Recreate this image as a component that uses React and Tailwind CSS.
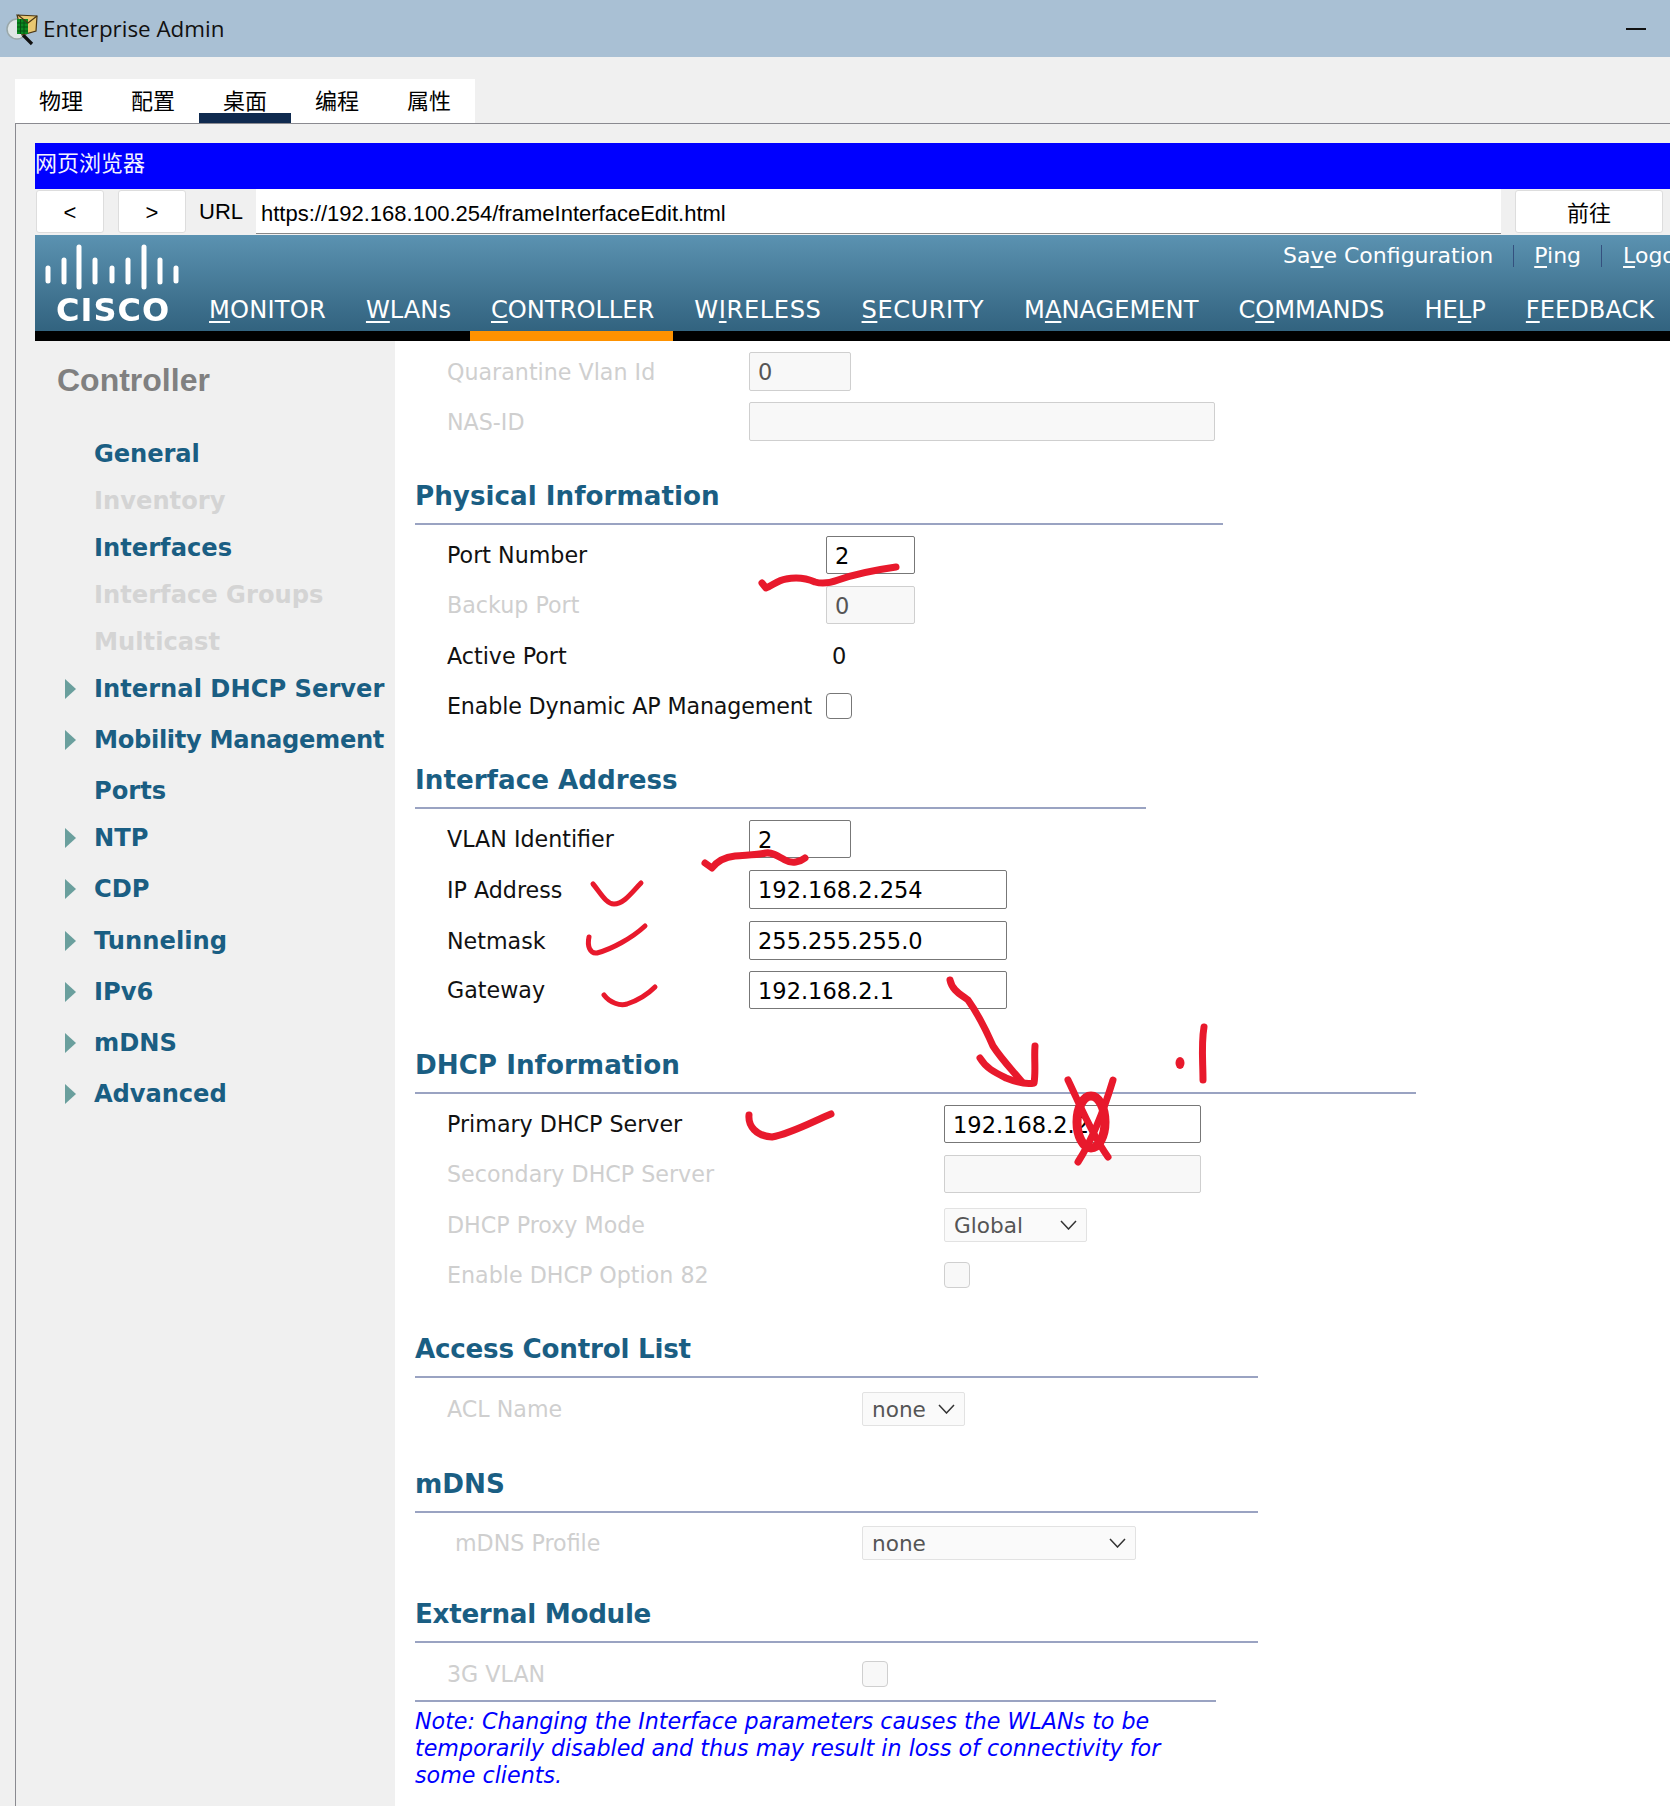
import React from "react";

const dv = "font-['DejaVu_Sans',sans-serif]";
const cjk = "font-['Noto_Sans_CJK_SC',sans-serif]";
const lib = "font-['Liberation_Sans',sans-serif]";

function Tab({ children, active }) {
  return (
    <div className="relative w-[92px] h-[44px] flex items-start justify-center pt-[5px]">
      <span className={`${cjk} text-[22px] leading-[30px] text-black`}>{children}</span>
      {active && <div className="absolute left-0 right-0 bottom-0 h-[10px] bg-[#0f2a4f]" />}
    </div>
  );
}

function Nav({ pre, u, post, cls = "" }) {
  return (
    <span className={`whitespace-nowrap ${cls}`}>
      {pre}
      <span className="underline underline-offset-[3px] decoration-[2px]">{u}</span>
      {post}
    </span>
  );
}

function Caret() {
  return (
    <svg width="13" height="22" viewBox="0 0 13 22" className="block blur-[0.5px]">
      <polygon points="1,1 12,11 1,21" fill="#6a9f9d" />
    </svg>
  );
}

const sideItems = [
  ["General", false, false, "mt-[34px]", "tracking-[-0.1px]"],
  ["Inventory", true, false, "mt-[7px]", ""],
  ["Interfaces", false, false, "mt-[7px]", ""],
  ["Interface Groups", true, false, "mt-[7px]", ""],
  ["Multicast", true, false, "mt-[7px]", ""],
  ["Internal DHCP Server", false, true, "mt-[7px]", ""],
  ["Mobility Management", false, true, "mt-[11px]", "tracking-[-0.35px]"],
  ["Ports", false, false, "mt-[11px]", ""],
  ["NTP", false, true, "mt-[7px]", ""],
  ["CDP", false, true, "mt-[11px]", ""],
  ["Tunneling", false, true, "mt-[12px]", ""],
  ["IPv6", false, true, "mt-[11px]", ""],
  ["mDNS", false, true, "mt-[11px]", ""],
  ["Advanced", false, true, "mt-[11px]", "tracking-[-0.1px]"],
];

function Heading({ children, width, mt, cls = "" }) {
  return (
    <div className={`${mt} ${width} h-[47px] ml-[20px] border-b-2 border-[#9aa3c2]`}>
      <div className={`${dv} font-bold text-[26.2px] leading-[36px] text-[#1a5e83] whitespace-nowrap ${cls}`}>{children}</div>
    </div>
  );
}

function Row({ label, labelW = "w-[302px]", disabled, mt, h = "h-[39px]", pl = "pl-[52px]", lc = "", children }) {
  return (
    <div className={`${mt} ${h} ${pl} flex items-center`}>
      <div className={`${labelW} shrink-0 pt-[2px] ${dv} text-[22.2px] whitespace-nowrap ${lc} ${disabled ? "text-[#cfcfcf]" : "text-[#111]"}`}>{label}</div>
      {children}
    </div>
  );
}

function Input({ value, w, disabled, h = "h-[39px]" }) {
  return (
    <div
      className={`${w} ${h} rounded-[2px] border flex items-center pl-[8px] pt-[3px] ${dv} text-[22.5px] ${
        disabled ? "bg-[#f8f8f8] border-[#cfcfcf] text-[#555]" : "bg-white border-[#777] text-black"
      }`}
    >
      {value}
    </div>
  );
}

function Select({ value, w }) {
  return (
    <div className={`${w} h-[34px] rounded-[2px] border border-[#e2e2e2] bg-[#fafafa] flex items-center justify-between pl-[9px] pr-[9px] ${dv} text-[21.6px] text-[#555]`}>
      <span className="pt-[2px]">{value}</span>
      <svg width="17" height="10" viewBox="0 0 17 10" fill="none" stroke="#333" strokeWidth="1.5">
        <path d="M1 1l7.5 8L16 1" />
      </svg>
    </div>
  );
}

function Check({ disabled }) {
  return (
    <div className={`w-[26px] h-[26px] rounded-[4px] border ${disabled ? "border-[#cfcfcf] bg-[#f8f8f8]" : "border-[#777] bg-white"}`} />
  );
}

function Ink() {
  const thick = [
    "M762 583 L766 588 C772 586 778 580 786 579 C796 577 806 578 815 582 C822 584 830 583 838 580 C855 574 875 570 896 567",
    "M705 863 L712 868 C718 860 726 857 735 856 C745 855 758 855 766 853 C772 852 778 856 785 860 C792 864 800 862 805 858",
    "M749 1115 C748 1126 756 1136 772 1137 C790 1134 812 1122 831 1114",
    "M950 980 C952 990 960 994 968 1000 C978 1014 986 1030 993 1046 C1002 1060 1014 1072 1022 1082",
    "M980 1058 C986 1068 994 1072 1006 1078 C1016 1082 1026 1085 1034 1083 C1036 1072 1034 1058 1035 1046",
    "M1204 1027 C1201 1044 1203 1062 1203 1080",
    "M1068 1080 C1080 1105 1092 1135 1108 1157",
    "M1113 1080 C1104 1110 1092 1140 1078 1162",
  ];
  const thin = [
    "M593 884 C600 892 606 904 614 904 C624 904 632 892 641 883",
    "M589 937 C587 946 590 954 597 953 C612 949 632 938 645 926",
    "M604 995 C610 1003 620 1006 627 1004 C636 1001 646 996 655 987",
  ];
  return (
    <svg className="absolute left-0 top-0 pointer-events-none" width="1670" height="1806" viewBox="0 0 1670 1806" fill="none">
      {thick.map((d, i) => (
        <path key={i} d={d} stroke="#e8192c" strokeWidth="7" strokeLinecap="round" strokeLinejoin="round" />
      ))}
      {thin.map((d, i) => (
        <path key={i} d={d} stroke="#e8192c" strokeWidth="5" strokeLinecap="round" strokeLinejoin="round" />
      ))}
      <ellipse cx="1091" cy="1122" rx="14" ry="26" stroke="#e8192c" strokeWidth="9" />
      <ellipse cx="1180" cy="1063" rx="4.5" ry="6" fill="#e8192c" />
    </svg>
  );
}

function CiscoBars() {
  const bars = [
    [48, 268, 281], [64, 260, 282], [79, 247, 287], [95, 260, 282], [112, 268, 281],
    [128, 260, 282], [144, 247, 287], [160, 260, 282], [176, 268, 281],
  ];
  return (
    <svg width="150" height="50" viewBox="35 240 150 50" className="block blur-[0.5px]">
      {bars.map(([x, a, b]) => (
        <line key={x} x1={x} x2={x} y1={a} y2={b} stroke="#fff" strokeWidth="5" strokeLinecap="round" />
      ))}
    </svg>
  );
}

export default function App() {
  return (
    <div className="relative w-[1670px] h-[1806px] overflow-hidden bg-[#f0f0f0]">
      {/* title bar */}
      <div className="h-[57px] bg-[#a9c0d4] flex items-center pl-[6px] pr-[24px]">
        <svg width="32" height="34" viewBox="0 0 32 34" className="shrink-0">
          <circle cx="11" cy="17" r="10" fill="#dfe6e6" stroke="#9aa8aa" strokeWidth="1.5" />
          <path d="M17 23l9 9" stroke="#111" strokeWidth="3.2" />
          <path d="M11 3l20 1-1 15-14 4z" fill="#e9c872" stroke="#4a3614" strokeWidth="1.2" />
          <rect x="11" y="7" width="11" height="15" fill="#0a8a20" />
          <path d="M11 11h11M11 15h11M11 19h11M14.5 7v15M18 7v15" stroke="#064d12" strokeWidth="0.9" />
          <path d="M12 3l10 8 9-7" fill="none" stroke="#4a3614" strokeWidth="1.2" />
        </svg>
        <span className="ml-[5px] pt-[1px] font-['Open_Sans',sans-serif] text-[22.4px] leading-[30px] text-[#111]">Enterprise Admin</span>
        <div className="ml-auto w-[20px] h-[2px] bg-[#111]" />
      </div>

      {/* tabs */}
      <div className="mt-[22px] ml-[15px] w-[460px] h-[44px] bg-white flex">
        <Tab>物理</Tab>
        <Tab>配置</Tab>
        <Tab active>桌面</Tab>
        <Tab>编程</Tab>
        <Tab>属性</Tab>
      </div>

      {/* panel */}
      <div className="ml-[15px] h-[1683px] border-l border-t border-[#8a8a90] pt-[19px] pl-[19px]">
        <div className={`h-[46px] bg-[#0000ff] flex items-center pb-[10px] ${cjk} text-[22px] text-[#f4f4ff]`}>网页浏览器</div>

        <div className={`h-[46px] flex ${lib}`}>
          <div className="w-[68px] h-[43px] ml-[1px] mt-[1px] pt-[1px] bg-white border border-[#ddd] rounded-[3px] flex items-center justify-center text-[22px] text-black">&lt;</div>
          <div className="w-[68px] h-[43px] ml-[14px] mt-[1px] pt-[1px] bg-white border border-[#ddd] rounded-[3px] flex items-center justify-center text-[22px] text-black">&gt;</div>
          <div className="w-[70px] pl-[13px] pt-[10px] text-[22px] leading-[26px] text-black">URL</div>
          <div className="w-[1245px] h-[45px] bg-white border-b border-[#888] pl-[5px] pt-[4px] flex items-center text-[22px] text-black whitespace-nowrap">
            https://192.168.100.254/frameInterfaceEdit.html
          </div>
          <div className={`w-[148px] h-[43px] ml-[14px] mt-[1px] bg-white border border-[#ddd] rounded-[3px] flex items-center justify-center ${cjk} text-[22px] text-black`}>前往</div>
        </div>

        {/* cisco header */}
        <div className="h-[96px] bg-gradient-to-b from-[#5b92b1] to-[#32637f] flex">
          <div className="w-[174px] shrink-0 pt-[5px]">
            <CiscoBars />
            <div className={`${dv} font-bold text-white text-[32px] leading-[32px] tracking-[1px] pl-[21px] mt-[4px] blur-[0.4px]`}>CISCO</div>
          </div>
          <div className="flex-1 flex flex-col min-w-0">
            <div className={`h-[41px] flex items-center pl-[1074px] ${dv} text-[22px] text-white whitespace-nowrap`}>
              <Nav pre="Sa" u="v" post="e Configuration" />
              <div className="w-[1px] h-[22px] bg-[#34507e] ml-[20px] mr-[20px] shrink-0" />
              <Nav u="P" post="ing" />
              <div className="w-[1px] h-[22px] bg-[#34507e] ml-[20px] mr-[21px] shrink-0" />
              <Nav u="L" post="ogout" />
            </div>
            <div className={`mt-[19px] flex gap-[40px] ${dv} text-[24.15px] leading-[30px] text-white`}>
              <Nav u="M" post="ONITOR" cls="tracking-[0.2px]" />
              <Nav u="W" post="LANs" />
              <Nav u="C" post="ONTROLLER" />
              <Nav pre="W" u="I" post="RELESS" cls="tracking-[0.6px]" />
              <Nav u="S" post="ECURITY" cls="tracking-[0.5px]" />
              <Nav pre="M" u="A" post="NAGEMENT" />
              <Nav pre="C" u="O" post="MMANDS" />
              <Nav pre="HE" u="L" post="P" />
              <Nav u="F" post="EEDBACK" />
            </div>
          </div>
        </div>

        {/* black bar */}
        <div className="h-[10px] bg-black flex">
          <div className="w-[435px] shrink-0" />
          <div className="w-[203px] bg-[#ff9200]" />
        </div>

        {/* body */}
        <div className="flex h-[1465px]">
          {/* sidebar */}
          <aside className="w-[360px] shrink-0">
            <div className={`mt-[19px] h-[40px] pl-[22px] flex items-center ${lib} font-bold text-[32px] text-[#808080]`}>Controller</div>
            {sideItems.map(([t, dis, arrow, mt, tr]) => (
              <div key={t} className={`${mt} h-[40px] flex items-center pl-[29px]`}>
                <div className="w-[30px] shrink-0">{arrow && <Caret />}</div>
                <span className={`${dv} font-bold text-[24.2px] whitespace-nowrap ${tr} ${dis ? "text-[#d4d4d4]" : "text-[#1a5e83]"}`}>{t}</span>
              </div>
            ))}
          </aside>

          {/* content */}
          <main className="flex-1 bg-white">
            <Row label="Quarantine Vlan Id" disabled mt="mt-[11px]"><Input value="0" w="w-[102px]" disabled /></Row>
            <Row label="NAS-ID" disabled mt="mt-[11px]"><Input value="" w="w-[466px]" disabled /></Row>

            <Heading width="w-[808px]" mt="mt-[37px]">Physical Information</Heading>
            <Row label="Port Number" labelW="w-[379px]" mt="mt-[11px]" h="h-[38px]"><Input value="2" w="w-[89px]" h="h-[38px]" /></Row>
            <Row label="Backup Port" labelW="w-[379px]" disabled mt="mt-[12px]" h="h-[38px]"><Input value="0" w="w-[89px]" h="h-[38px]" disabled /></Row>
            <Row label="Active Port" labelW="w-[385px]" mt="mt-[12px]"><span className={`${dv} text-[22.5px] text-[#111] pt-[2px]`}>0</span></Row>
            <Row label="Enable Dynamic AP Management" labelW="w-[379px]" lc="tracking-[-0.15px]" mt="mt-[11px]"><Check /></Row>

            <Heading width="w-[731px]" mt="mt-[37px]">Interface Address</Heading>
            <Row label="VLAN Identifier" mt="mt-[11px]" h="h-[38px]"><Input value="2" w="w-[102px]" h="h-[38px]" /></Row>
            <Row label="IP Address" mt="mt-[12px]"><Input value="192.168.2.254" w="w-[258px]" /></Row>
            <Row label="Netmask" mt="mt-[12px]"><Input value="255.255.255.0" w="w-[258px]" /></Row>
            <Row label="Gateway" mt="mt-[11px]" h="h-[38px]"><Input value="192.168.2.1" w="w-[258px]" h="h-[38px]" /></Row>

            <Heading width="w-[1001px]" mt="mt-[38px]">DHCP Information</Heading>
            <Row label="Primary DHCP Server" labelW="w-[497px]" mt="mt-[11px]" h="h-[38px]"><Input value="192.168.2.2" w="w-[257px]" h="h-[38px]" /></Row>
            <Row label="Secondary DHCP Server" labelW="w-[497px]" disabled mt="mt-[12px]" h="h-[38px]"><Input value="" w="w-[257px]" h="h-[38px]" disabled /></Row>
            <Row label="DHCP Proxy Mode" labelW="w-[497px]" disabled mt="mt-[15px]" h="h-[34px]"><Select value="Global" w="w-[143px]" /></Row>
            <Row label="Enable DHCP Option 82" labelW="w-[497px]" disabled mt="mt-[14px]" h="h-[38px]"><Check disabled /></Row>

            <Heading width="w-[843px]" cls="tracking-[-0.25px]" mt="mt-[37px]">Access Control List</Heading>
            <Row label="ACL Name" labelW="w-[415px]" disabled mt="mt-[14px]" h="h-[34px]"><Select value="none" w="w-[103px]" /></Row>

            <Heading width="w-[843px]" mt="mt-[40px]">mDNS</Heading>
            <Row label="mDNS Profile" labelW="w-[407px]" pl="pl-[60px]" disabled mt="mt-[13px]" h="h-[34px]"><Select value="none" w="w-[274px]" /></Row>

            <Heading width="w-[843px]" cls="tracking-[-0.3px]" mt="mt-[36px]">External Module</Heading>
            <Row label="3G VLAN" labelW="w-[415px]" disabled mt="mt-[12px]" h="h-[38px]"><Check disabled /></Row>

            <div className="mt-[7px] ml-[20px] w-[801px] h-[2px] bg-[#9aa3c2]" />
            <div className={`mt-[6px] ml-[20px] w-[790px] ${dv} italic text-[22.2px] leading-[27px] text-[#0000ff]`}>
              Note: Changing the Interface parameters causes the WLANs to be temporarily disabled and thus may result in loss of connectivity for some clients.
            </div>
          </main>
        </div>
      </div>

      <Ink />
    </div>
  );
}
